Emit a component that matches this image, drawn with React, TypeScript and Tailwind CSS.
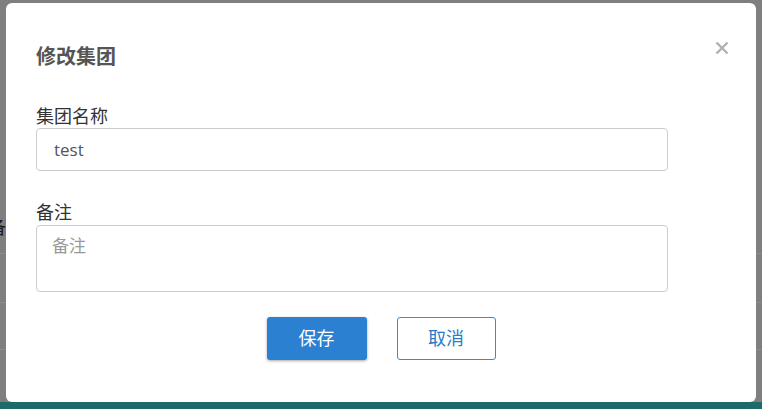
import React from 'react'

const font = { fontFamily: '"Open Sans", "Noto Sans CJK SC", sans-serif' }

function Backdrop() {
  return (
    <div className="absolute inset-0 flex flex-col bg-[#7f7f7f]">
      <div className="h-[253px] relative">
        <span className="absolute left-[-12px] top-[214px] text-[18px] text-[#1a1a1a]">备注</span>
      </div>
      <div className="h-[49px] border-t border-[#8c8c8c]" />
      <div className="h-[47px] border-t border-[#8c8c8c]" />
      <div className="flex-1 border-t border-[#8c8c8c]" />
      <div className="h-[7px] bg-[#1d6a69]" />
    </div>
  )
}

export default function App() {
  return (
    <div className="relative w-[762px] h-[409px] overflow-hidden" style={font}>
      <Backdrop />
      <div className="absolute left-[6px] top-[3px] w-[750px] h-[399px] bg-white rounded-[6px] px-[30px] pt-[40px]">
        <button className="absolute right-[27px] top-[36px] leading-none">
          <svg width="14" height="14" viewBox="0 0 14 14" className="mt-[2px]">
            <path d="M1.5 1.5 L12.5 12.5 M12.5 1.5 L1.5 12.5" stroke="#b0b0b0" strokeWidth="2.4" />
          </svg>
        </button>
        <h2 className="text-[20px] leading-[28px] font-bold text-[#555555]">修改集团</h2>

        <div className="mt-[33px] flex flex-col w-[632px]">
          <label className="text-[18px] leading-[24px] text-[#333333]">集团名称</label>
          <input
            readOnly
            value="test"
            className="h-[43px] border border-[#cccccc] rounded-[4px] px-[17px] text-[17px] text-[#555555] outline-none"
          />
          <label className="mt-[29px] text-[18px] leading-[25px] text-[#333333]">备注</label>
          <textarea
            placeholder="备注"
            className="h-[67px] border border-[#cccccc] rounded-[4px] px-[15px] pt-[7px] text-[17px] text-[#555555] placeholder:text-[#999999] outline-none resize-none"
          />
        </div>

        <div className="mt-[25px] flex justify-center gap-[30px]">
          <button className="w-[100px] h-[43px] bg-[#2b80d2] text-white text-[18px] rounded-[3px] shadow-[0_1px_3px_rgba(0,0,0,0.35)]">
            保存
          </button>
          <button className="w-[99px] h-[43px] bg-white text-[#2a7cc9] text-[18px] rounded-[3px] border border-[#3a8ad6]">
            取消
          </button>
        </div>
      </div>
    </div>
  )
}
